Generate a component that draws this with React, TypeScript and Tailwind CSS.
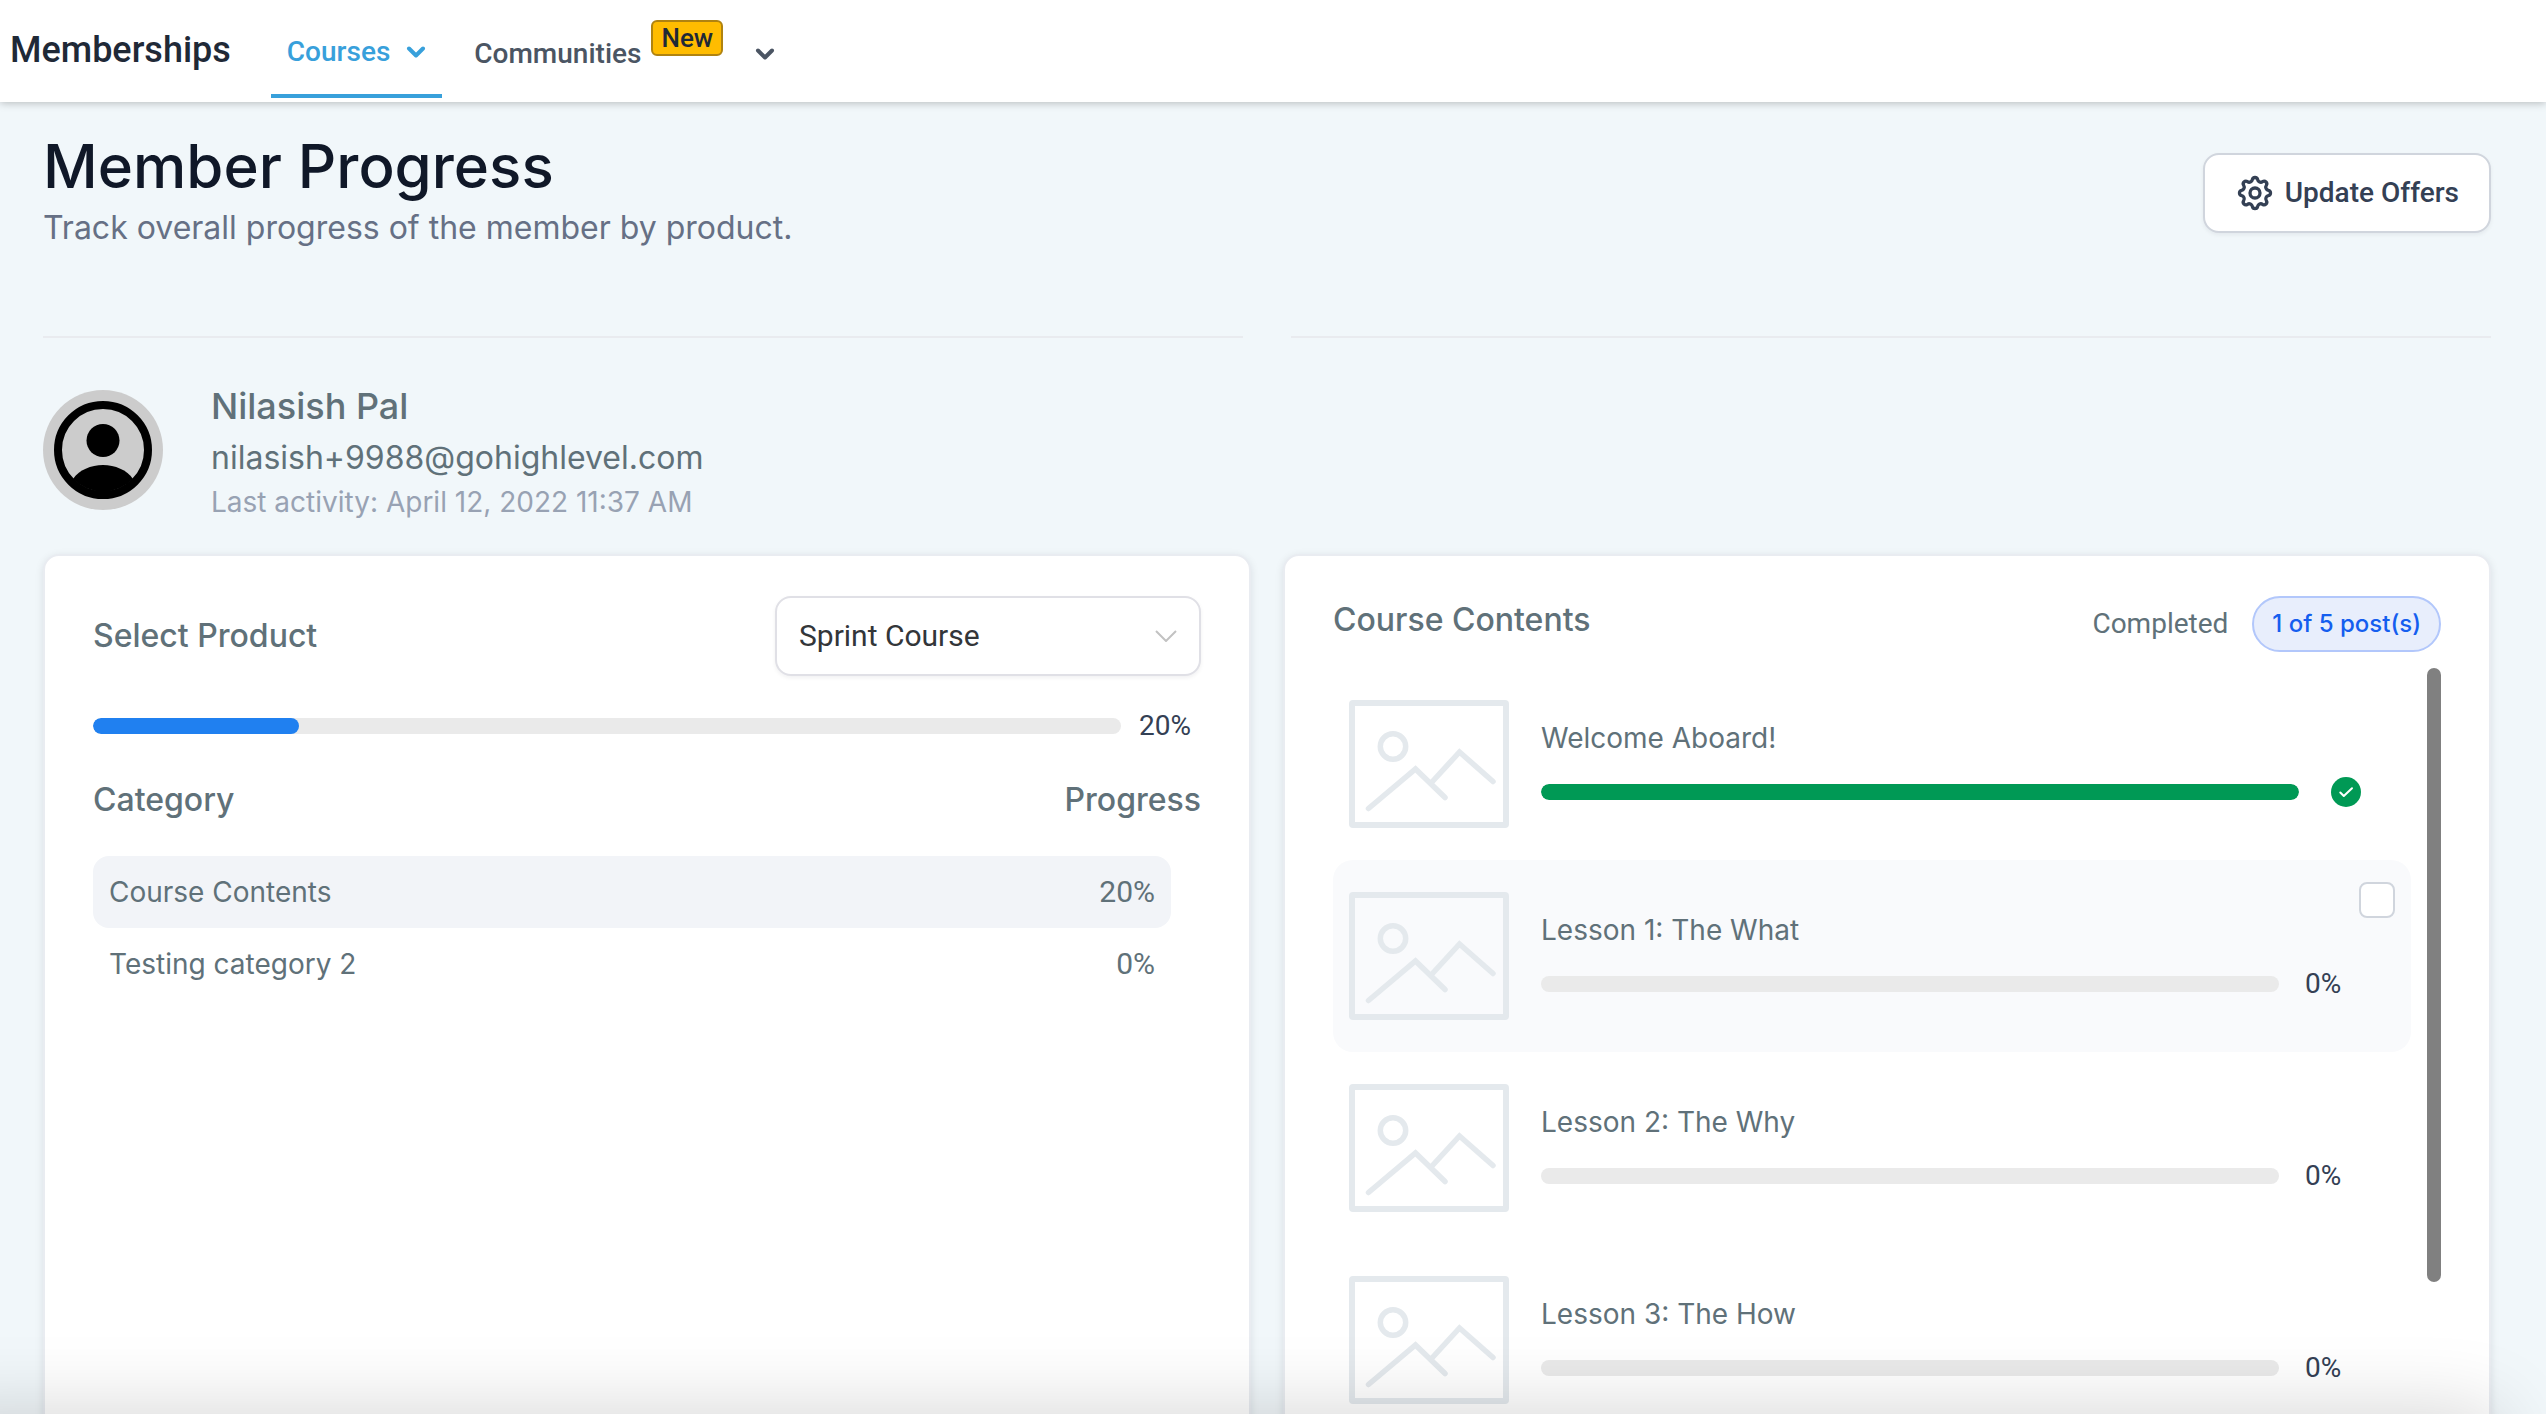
import React from 'react';

interface Category {
  name: string;
  progress: number;
}

interface Post {
  title: string;
  progress: number;
  highlighted?: boolean;
}

const categories: Category[] = [
  { name: 'Course Contents', progress: 20 },
  { name: 'Testing category 2', progress: 0 },
];

const posts: Post[] = [
  { title: 'Welcome Aboard!', progress: 100 },
  { title: 'Lesson 1: The What', progress: 0, highlighted: true },
  { title: 'Lesson 2: The Why', progress: 0 },
  { title: 'Lesson 3: The How', progress: 0 },
];

const NavChevron = () => (
  <svg viewBox="0 0 20 12" className="h-3 w-5" fill="none" stroke="currentColor" strokeWidth="4" aria-hidden="true">
    <path d="M3 2.5 10 9.5 17 2.5" strokeLinecap="round" strokeLinejoin="round" />
  </svg>
);

const Gear = () => (
  <svg viewBox="0 0 40 40" className="size-10" fill="none" stroke="currentColor" strokeWidth="3.3" aria-hidden="true">
    <path
      d="M33.34 17.35A2.7 2.7 0 0 1 33.34 22.65A3.2 3.2 0 0 0 31.31 27.56A2.7 2.7 0 0 1 27.56 31.31A3.2 3.2 0 0 0 22.65 33.34A2.7 2.7 0 0 1 17.35 33.34A3.2 3.2 0 0 0 12.44 31.31A2.7 2.7 0 0 1 8.69 27.56A3.2 3.2 0 0 0 6.66 22.65A2.7 2.7 0 0 1 6.66 17.35A3.2 3.2 0 0 0 8.69 12.44A2.7 2.7 0 0 1 12.44 8.69A3.2 3.2 0 0 0 17.35 6.66A2.7 2.7 0 0 1 22.65 6.66A3.2 3.2 0 0 0 27.56 8.69A2.7 2.7 0 0 1 31.31 12.44A3.2 3.2 0 0 0 33.34 17.35Z"
      strokeLinejoin="round"
    />
    <circle cx="20" cy="20" r="5" />
  </svg>
);

const Avatar = () => (
  <svg viewBox="0 0 120 120" className="size-30 shrink-0" aria-hidden="true">
    <circle cx="60" cy="60" r="60" fill="#ccc" />
    <circle cx="60" cy="60" r="45" fill="none" stroke="#000" strokeWidth="8" />
    <circle cx="60" cy="50.5" r="16.5" />
    <path d="M30 89C36 80 48 75 60 75S84 80 90 89A42 42 0 0 1 30 89Z" />
  </svg>
);

const Placeholder = () => (
  <svg
    viewBox="0 0 160 128"
    className="h-32 w-40 shrink-0"
    fill="none"
    stroke="#e4e9ed"
    strokeWidth="6"
    strokeLinecap="round"
    aria-hidden="true"
  >
    <rect x="3" y="3" width="154" height="122" rx="1" />
    <circle cx="44" cy="46.5" r="12.7" strokeWidth="5.5" />
    <path d="M19.5 108.5 66.5 69 96 97.5M83 82 110.5 52 144 81.5" strokeWidth="5.5" />
  </svg>
);

const ProgressBar: React.FC<{ value: number; color: string; label: string }> = ({ value, color, label }) => (
  <div
    role="progressbar"
    aria-label={label}
    aria-valuenow={value}
    aria-valuemin={0}
    aria-valuemax={100}
    className="h-4 flex-1 overflow-hidden rounded-full bg-[#eaeaea]"
  >
    <div className={`h-full rounded-full ${color}`} style={{ width: `${value}%` }} />
  </div>
);

const TopNav = () => (
  <header className="relative z-10 flex h-[102px] shrink-0 items-stretch bg-white pl-2.5 font-[Roboto,sans-serif] text-[28px] leading-8 font-medium text-[#4b5563] shadow-[0_1px_8px_rgba(0,0,0,0.25)]">
    <div className="mr-10 pt-7 text-4xl leading-11 text-[#1f2937]">Memberships</div>
    <nav className="flex items-stretch gap-8">
      <a href="#courses" className="mb-1 flex items-start gap-4 border-b-4 border-[#38a0db] px-4 pt-9 text-[#38a0db]">
        Courses
        <span className="pt-2.5">
          <NavChevron />
        </span>
      </a>
      <a href="#communities" className="flex items-start gap-2.5 pt-9">
        <span className="pt-0.5">Communities</span>
        <span className="-mt-4 h-9 rounded-md border-2 border-[#b08310] bg-[#ffbc00] px-2 text-[26px] leading-8 text-[#1f2937]">
          New
        </span>
      </a>
      <button type="button" aria-label="More" className="flex items-start pt-12">
        <NavChevron />
      </button>
    </nav>
  </header>
);

const ProductCard = () => (
  <section className="rounded-2xl border-2 border-[#e9ecf1] bg-white px-12 py-10 shadow-[0_2px_8px_rgba(16,24,40,0.1)]">
    <div className="flex h-20 items-center justify-between">
      <label htmlFor="product" className="text-[32px] font-medium">
        Select Product
      </label>
      <div className="relative">
        <select
          id="product"
          className="h-20 w-[426px] appearance-none rounded-2xl border-2 border-[#e0e0e6] bg-white px-[22px] font-[Roboto,sans-serif] text-3xl text-[#333639] shadow-[0_2px_4px_rgba(16,24,40,0.06)]"
        >
          <option>Sprint Course</option>
        </select>
        <svg
          viewBox="0 0 22 12"
          className="pointer-events-none absolute top-[34px] right-6 h-3 w-[22px]"
          fill="none"
          stroke="#c2c2c2"
          strokeWidth="2"
          aria-hidden="true"
        >
          <path d="M1 1 11 11 21 1" />
        </svg>
      </div>
    </div>

    <div className="mt-8 flex h-9 items-center">
      <ProgressBar value={20} color="bg-[#2080f0]" label="Sprint Course" />
      <span className="w-20 pl-[18px] font-[Roboto,sans-serif] text-[28px] text-[#344054]">20%</span>
    </div>

    <table className="mt-8 block">
      <thead className="block">
        <tr className="flex h-12 items-center justify-between text-[32px]">
          <th className="font-medium">Category</th>
          <th className="font-medium">Progress</th>
        </tr>
      </thead>
      <tbody className="mt-8 mr-[30px] block">
        {categories.map((c, index) => (
          <tr
            key={c.name}
            className={`flex h-18 items-center justify-between rounded-2xl px-4 text-[28px] ${index === 0 ? 'bg-[#f2f4f8]' : ''}`}
          >
            <td>{c.name}</td>
            <td className="font-[Roboto,sans-serif] text-3xl">{c.progress}%</td>
          </tr>
        ))}
      </tbody>
    </table>
  </section>
);

const PostRow: React.FC<{ post: Post }> = ({ post }) => (
  <li
    className={`relative flex h-48 gap-8 rounded-[20px] pt-8 pr-[50px] pl-4 ${post.highlighted ? 'bg-[#f9fafc]' : ''}`}
  >
    <Placeholder />
    <div className="flex-1 pt-[18px]">
      <h3 className="text-[28px] leading-10">{post.title}</h3>
      {post.progress === 100 ? (
        <div className="mt-4 flex h-9 items-center gap-8">
          <ProgressBar value={100} color="bg-[#009955]" label={post.title} />
          <svg viewBox="0 0 30 30" className="size-[30px]" aria-label="Completed">
            <circle cx="15" cy="15" r="15" fill="#009955" />
            <path
              d="M9.3 15.5 12.8 19 21 11.2"
              fill="none"
              stroke="#fff"
              strokeWidth="2"
              strokeLinecap="round"
              strokeLinejoin="round"
            />
          </svg>
        </div>
      ) : (
        <div className="mt-4 flex h-9 items-center gap-6">
          <ProgressBar value={post.progress} color="bg-[#009955]" label={post.title} />
          <span className="w-[58px] pl-0.5 font-[Roboto,sans-serif] text-[28px] text-[#344054]">{post.progress}%</span>
        </div>
      )}
    </div>
    {post.highlighted && (
      <input
        type="checkbox"
        aria-label={`Mark ${post.title} as complete`}
        className="absolute top-[22px] right-4 size-9 appearance-none rounded-lg border-2 border-[#d0d5dd] bg-white"
      />
    )}
  </li>
);

const ContentsCard = () => (
  <section className="rounded-2xl border-2 border-[#e9ecf1] bg-white px-12 py-10 shadow-[0_2px_8px_rgba(16,24,40,0.1)]">
    <div className="flex h-14 items-start justify-between">
      <h2 className="text-[32px] leading-12 font-medium">Course Contents</h2>
      <div className="flex items-center gap-6">
        <span className="font-[Roboto,sans-serif] text-[28px]">Completed</span>
        <span className="flex h-14 items-center rounded-full border-2 border-[#b2c7fb] bg-[#e8eefc] px-[18px] text-2xl font-medium text-[#155eef]">
          1 of 5 post(s)
        </span>
      </div>
    </div>
    <div className="mt-4 flex gap-4">
      <ul className="flex-1">
        {posts.map((post) => (
          <PostRow key={post.title} post={post} />
        ))}
      </ul>
      <div className="h-[614px] w-3.5 rounded-full bg-[#808080]" />
    </div>
  </section>
);

const App: React.FC = () => {
  return (
    <div className="relative flex h-screen flex-col overflow-hidden bg-[#f1f7fa] font-[Inter,sans-serif] text-[#607179]">
      <TopNav />
      <main className="pr-[55px] pl-[43px]">
        <div className="flex items-start justify-between pt-7">
          <div>
            <h1 className="text-6xl leading-[72px] font-medium text-[#101828]">Member Progress</h1>
            <p className="mt-0.5 text-[32px] leading-12 text-[#667085]">
              Track overall progress of the member by product.
            </p>
          </div>
          <button
            type="button"
            className="mt-[23px] flex h-20 items-center gap-2.5 rounded-2xl border-2 border-[#d0d5dd] bg-white px-[30px] font-[Roboto,sans-serif] text-[28px] font-medium text-[#344054] shadow-[0_2px_4px_rgba(16,24,40,0.06)]"
          >
            <Gear />
            Update Offers
          </button>
        </div>

        <div className="mt-21 grid grid-cols-2 gap-12">
          <hr className="border-t-2 border-[#e9ebef]" />
          <hr className="border-t-2 border-[#e9ebef]" />
        </div>

        <div className="mt-11 flex h-[140px] items-start gap-12">
          <div className="pt-2">
            <Avatar />
          </div>
          <div>
            <h2 className="text-4xl leading-12 font-medium">Nilasish Pal</h2>
            <p className="text-[32px] leading-14">nilasish+9988@gohighlevel.com</p>
            <p className="text-[28px] leading-8 text-[#98a2b3]">Last activity: April 12, 2022 11:37 AM</p>
          </div>
        </div>

        <div className="mt-8 grid grid-cols-2 gap-8">
          <ProductCard />
          <ContentsCard />
        </div>
      </main>
      <div className="pointer-events-none absolute right-12 -bottom-20 -left-20 z-20 h-20 shadow-[0_0_80px_rgba(0,0,0,0.18)]" />
    </div>
  );
};

export default App;
